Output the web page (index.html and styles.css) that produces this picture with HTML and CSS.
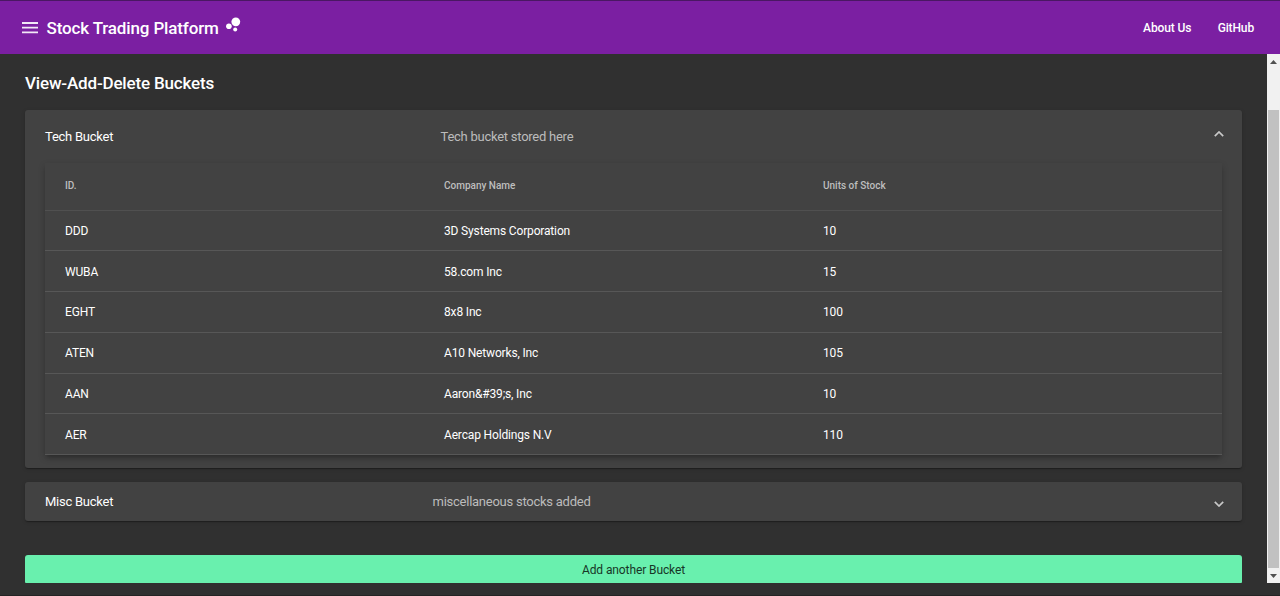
FILE: index.html
```html
<!DOCTYPE html>
<html lang="en">
<head>
<meta charset="utf-8">
<title>Stock Trading Platform</title>
<link rel="stylesheet" href="styles.css">
</head>
<body>
<header class="toolbar">
  <svg class="menu-icon" viewBox="0 0 16 12" width="16" height="12"><path d="M0 1h16M0 5.7h16M0 10.4h16" stroke="currentColor" stroke-width="1.8"/></svg>
  <span class="brand">Stock Trading Platform</span>
  <svg class="bubbles" viewBox="0 0 15 15" width="15" height="15" fill="currentColor"><circle cx="9.8" cy="4.8" r="4.4"/><circle cx="2.9" cy="9.2" r="2.8"/><circle cx="9.2" cy="12.4" r="2"/></svg>
  <nav class="links"><a class="about">About Us</a><a class="github">GitHub</a></nav>
</header>
<div class="viewport">
  <main class="content">
    <h1 class="title">View-Add-Delete Buckets</h1>
    <section class="panel panel-open">
      <div class="panel-header">
        <span class="panel-title">Tech Bucket</span>
        <span class="panel-desc">Tech bucket stored here</span>
        <svg class="chevron up" viewBox="0 0 10 6" width="10" height="6"><path d="M.8 5.2 5 1l4.2 4.2" fill="none" stroke="currentColor" stroke-width="1.7"/></svg>
      </div>
      <div class="table">
        <div class="row head"><span>ID.</span><span>Company Name</span><span>Units of Stock</span></div>
        <div class="row"><span>DDD</span><span>3D Systems Corporation</span><span>10</span></div>
        <div class="row"><span>WUBA</span><span>58.com Inc</span><span>15</span></div>
        <div class="row"><span>EGHT</span><span>8x8 Inc</span><span>100</span></div>
        <div class="row"><span>ATEN</span><span>A10 Networks, Inc</span><span>105</span></div>
        <div class="row"><span>AAN</span><span>Aaron&amp;#39;s, Inc</span><span>10</span></div>
        <div class="row"><span>AER</span><span>Aercap Holdings N.V</span><span>110</span></div>
      </div>
    </section>
    <section class="panel panel-closed">
      <div class="panel-header">
        <span class="panel-title">Misc Bucket</span>
        <span class="panel-desc">miscellaneous stocks added</span>
        <svg class="chevron down" viewBox="0 0 10 6" width="10" height="6"><path d="M.8.8 5 5 9.2.8" fill="none" stroke="currentColor" stroke-width="1.7"/></svg>
      </div>
    </section>
    <button class="add">Add another Bucket</button>
  </main>
  <div class="scrollbar">
    <svg class="arrow" viewBox="0 0 7 4" width="7" height="4"><path d="M0 4 3.5 0 7 4z" fill="#505050"/></svg>
    <div class="thumb"></div>
    <svg class="arrow arrow-down" viewBox="0 0 7 4" width="7" height="4"><path d="M0 0h7L3.5 4z" fill="#505050"/></svg>
  </div>
</div>
</body>
</html>
```
FILE: styles.css
```css
* { box-sizing: border-box; }
body {
  margin: 0;
  height: 596px;
  overflow: hidden;
  background: #303030;
  border-bottom: 1px solid #242424;
  color: #fff;
  font-family: Roboto, "Liberation Sans", sans-serif;
}
.toolbar {
  height: 54px;
  padding: 1px 26px 0 22px;
  display: flex;
  align-items: center;
  background: #7b1fa2;
  border-top: 1px solid #4a1763;
}
.menu-icon { margin-right: 8.5px; color: #f3e8f7; }
.brand { font-size: 17px; font-weight: 500; letter-spacing: -0.14px; }
.bubbles { margin: -7px 0 0 7px; }
.links { margin-left: auto; display: flex; gap: 26.5px; font-size: 12px; font-weight: 500; letter-spacing: -0.14px; }
.viewport { height: 529px; display: flex; }
.content { width: 1267px; padding: 19px 25px 0; }
.title { margin: 0 0 16px; font-size: 17px; line-height: 21px; font-weight: 500; letter-spacing: -0.17px; }
.panel {
  background: #424242;
  border-radius: 3px;
  box-shadow: 0 2px 1px -1px rgba(0,0,0,.2), 0 1px 1px rgba(0,0,0,.14), 0 1px 4px rgba(0,0,0,.12);
}
.panel-open { height: 358px; padding: 0 20px; }
.panel-header { display: flex; align-items: center; font-size: 13px; letter-spacing: -0.25px; }
.panel-open .panel-header { height: 53px; padding-bottom: 1px; }
.panel-title { width: 395.5px; }
.panel-desc { color: #bcbcbc; }
.chevron { margin-left: auto; color: #c8c8c8; }
.up { margin-top: -5px; margin-right: -1.5px; }
.table {
  background: #424242;
  box-shadow: 0 4px 4px -2px rgba(0,0,0,.2), 0 3px 7px rgba(0,0,0,.2);
}
.row {
  height: 40.75px;
  padding: 1px 20px 0;
  display: grid;
  grid-template-columns: repeat(3, 1fr);
  align-items: center;
  border-bottom: 1px solid #575757;
  font-size: 12px;
  letter-spacing: -0.16px;
}
.head { height: 47.5px; padding: 0 20px 1px; color: #bebebe; font-size: 10px; font-weight: 500; letter-spacing: 0; border-bottom-color: #505050; }
.panel-closed { margin-top: 14px; height: 39px; padding: 0 20px; }
.panel-closed .panel-header { height: 39px; }
.panel-closed .panel-title { width: 387.5px; }
.down { margin-top: 5px; margin-right: -1.5px; }
.add {
  display: block;
  width: 100%;
  height: 28px;
  margin: 34px 0 0;
  padding: 2px 0 0;
  border: 0;
  border-radius: 3px 3px 1px 1px;
  background: #69f0ae;
  color: #173626;
  font: 400 12px Roboto, sans-serif;
  letter-spacing: -0.1px;
}
.scrollbar {
  width: 13px;
  padding: 6px 0 4px;
  display: flex;
  flex-direction: column;
  align-items: center;
  background: #f1f1f1;
}
.thumb { width: 11px; height: 458px; margin-top: 46px; background: #c1c1c1; }
.arrow-down { margin-top: 6px; }
```
